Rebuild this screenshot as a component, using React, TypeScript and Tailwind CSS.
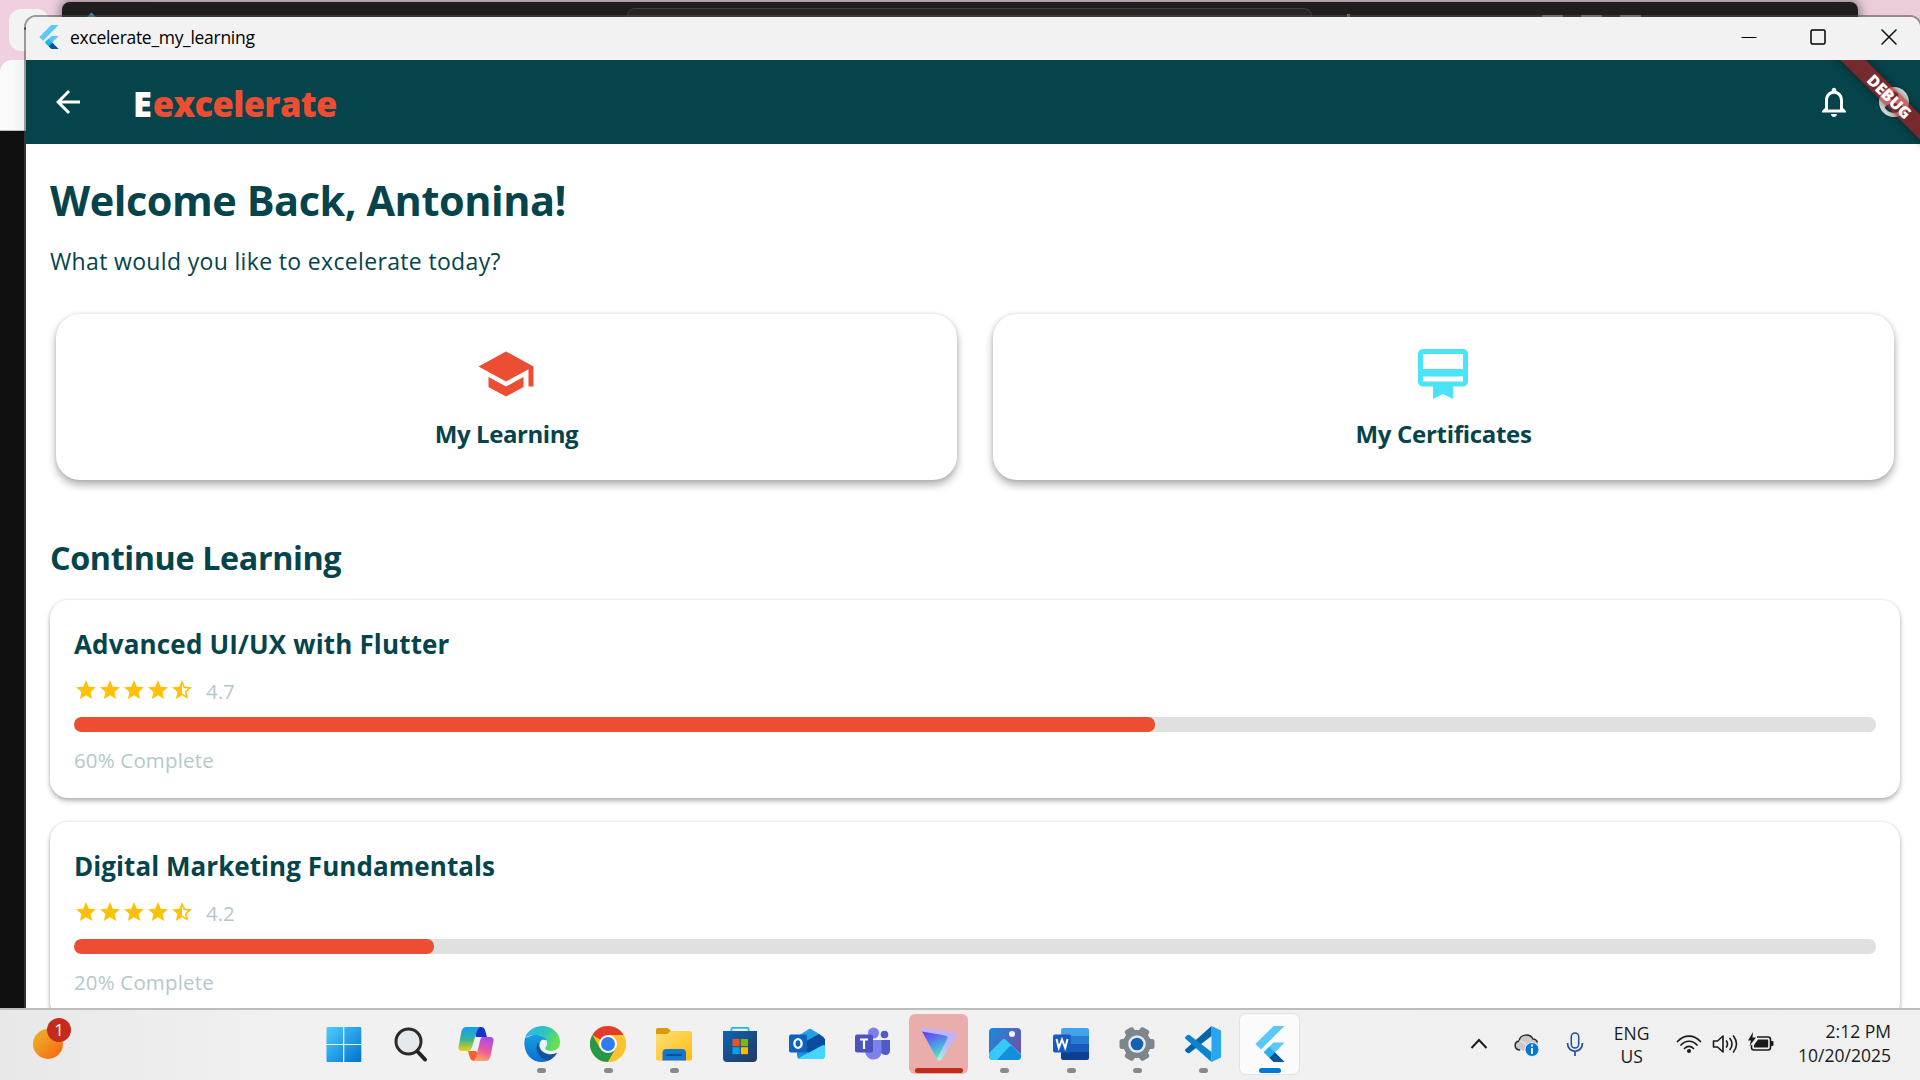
import React from "react";

const Svg = ({ className, viewBox = "0 0 36 36", children }: { className: string; viewBox?: string; children: React.ReactNode }) => (
  <svg className={className} viewBox={viewBox} fill="none">{children}</svg>
);

const FlutterLogo = ({ className }: { className: string }) => (
  <Svg className={className} viewBox="0 0 24 24">
    <path fill="#5bc8fa" d="M14.314 0L2.3 12 6 15.7 21.684.013z" />
    <path fill="#5bc8fa" d="M14.328 11.072L7.857 17.53l3.7 3.7L21.7 11.072z" />
    <path fill="#27b0ee" d="M11.55 13.84l3.7 3.69-3.7 3.7-3.69-3.7z" />
    <path fill="#01579b" d="M11.55 21.22l3.69-3.69L21.7 24h-7.37z" />
  </Svg>
);

const Star = ({ half = false }: { half?: boolean }) => (
  <Svg className="size-6" viewBox="0 0 24 24">
    <path
      fill="#ffc107"
      d={half
        ? "M22 9.24l-7.19-.62L12 2 9.19 8.63 2 9.24l5.46 4.73L5.82 21 12 17.27 18.18 21l-1.63-7.03L22 9.24zM12 15.4V6.1l1.71 4.04 4.38.38-3.32 2.88 1 4.28L12 15.4z"
        : "M12 17.27L18.18 21l-1.64-7.03L22 9.24l-7.19-.61L12 2 9.19 8.63 2 9.24l5.46 4.73L5.82 21z"}
    />
  </Svg>
);

const courses = [
  { title: "Advanced UI/UX with Flutter", rating: "4.7", progress: 60, spacing: "tracking-[0.17px]" },
  { title: "Digital Marketing Fundamentals", rating: "4.2", progress: 20, spacing: "tracking-[0.06px]" },
];

const CourseCard = ({ title, rating, progress, spacing }: (typeof courses)[number]) => (
  <article className="mb-6 h-[198px] rounded-[18px] bg-white px-6 pt-[26px] shadow-[0_3px_5px_rgba(0,0,0,0.28),0_0_3px_rgba(0,0,0,0.12)]">
    <h3 className={`text-[26px] leading-9 font-bold ${spacing}`}>{title}</h3>
    <div className="mt-4 flex h-6 items-center">
      <Star /><Star /><Star /><Star /><Star half />
      <span className="mt-px ml-[12px] text-[20.5px] leading-[26px] text-[#b4c8ca]">{rating}</span>
    </div>
    <div className="mt-[15px] h-[15px] overflow-hidden rounded-[7px] bg-[#e0e0e0]">
      <div className="h-full rounded-[7px] bg-[#ed4d32]" style={{ width: `${progress}%` }} />
    </div>
    <p className="mt-[14px] text-[20.5px] leading-7 tracking-[0.15px] text-[#b4c8ca]">{progress}% Complete</p>
  </article>
);

const TaskIcon = ({ children, tile = "", bar = "" }: { children: React.ReactNode; tile?: string; bar?: string }) => (
  <div className="flex w-[66.15px] justify-center pt-1">
    <div className={`flex h-[60px] w-[59px] flex-col items-center justify-between rounded-md pt-3 pb-px ${tile}`}>
      {children}
      <div className={`h-[5px] rounded-full ${bar}`} />
    </div>
  </div>
);
const dot = "w-[9px] bg-[#8a8a8a]";

const Taskbar = () => (
  <footer className="absolute inset-x-0 top-[1008px] flex h-[72px] border-t-2 border-[#bdbdbd] bg-gradient-to-r from-[#e8e8e8] via-[#f1f1f1] via-15% to-[#f0f0f0]">
    <div className="relative w-[310.500px] shrink-0">
      <div className="absolute top-[19px] left-[33px] size-[30px] rounded-full bg-gradient-to-br from-[#edb62c] to-[#f3620a]" />
      <div className="absolute top-[8px] left-[47px] size-6 rounded-full bg-[#c42b1c] text-center text-[17px] leading-6 text-white">1</div>
    </div>
    <TaskIcon>
      <Svg className="size-9"><defs><linearGradient id="win" x1="0" y1="0" x2="1" y2="1"><stop stopColor="#4ccdff" /><stop offset="1" stopColor="#0072cf" /></linearGradient></defs>
        <path fill="url(#win)" d="M.5 2a1 1 0 011-1H17v17H.5zM18.3 1h16a1 1 0 011 1v16h-17zM.5 19H17v17H1.5a1 1 0 01-1-1zM18.3 19h17v16a1 1 0 01-1 1h-16z" /></Svg>
    </TaskIcon>
    <TaskIcon>
      <Svg className="size-9"><circle cx="16.5" cy="15.5" r="12.5" stroke="#2b2b2b" strokeWidth="3" fill="#e6e9eb" /><path d="M26 26l7 7.5" stroke="#222" strokeWidth="4" strokeLinecap="round" /></Svg>
    </TaskIcon>
    <TaskIcon>
      <Svg className="size-9"><defs>
        <linearGradient id="cp1" x1="0" y1="0" x2="0" y2="1"><stop offset=".1" stopColor="#16a0ee" /><stop offset=".55" stopColor="#41b78a" /><stop offset="1" stopColor="#f2d20c" /></linearGradient>
        <linearGradient id="cp2" x1=".6" y1="0" x2=".3" y2="1"><stop stopColor="#a44cf0" /><stop offset=".55" stopColor="#ef5a99" /><stop offset="1" stopColor="#ffab5e" /></linearGradient></defs>
        <path d="M10 25l2 7q1 3 5 3h7l-6-10z" fill="#f4632e" /><path d="M16 1h7q3 0 4 3l2 7H18z" fill="#1436c4" />
        <path d="M8 1h14q-2 1-3 4l-5 16q-1 4-5 4H4q-4 0-3.500-4l3-16Q5 1 8 1z" fill="url(#cp1)" />
        <path d="M24 11h8q4 0 3.500 4l-3 15q-1 5-5 5H15q2-1 3-4l4-16q.5-3 2-4z" fill="url(#cp2)" /></Svg>
    </TaskIcon>
    <TaskIcon bar={dot}>
      <Svg className="size-9"><defs>
        <linearGradient id="eg1" x1="0" y1="0" x2="1" y2=".4"><stop stopColor="#2ab4f2" /><stop offset=".6" stopColor="#2fc6b8" /><stop offset="1" stopColor="#66e04f" /></linearGradient>
        <linearGradient id="eg2" x1="0" y1="0" x2="0" y2="1"><stop stopColor="#1a9fe2" /><stop offset="1" stopColor="#0a6fd0" /></linearGradient>
        <clipPath id="egc"><path d="M0 0h36v19q0 6-6 6-2 0-4-.5 3 2 7.500 1L36 36H0z" /></clipPath></defs>
        <path d="M1 12C-2 25 6 36 18 36c7 0 12-4 15-9-7 3-14 0-14-7 0-5 4-6 4-8L12 8z" fill="url(#eg2)" />
        <path d="M1 12C3 5 10 0 18 0c10 0 18 7 18 16 0 6-4 9-9 9-4 0-6-1-6-3 0-1 2-2 2-5 0-4-4-8-10-8C7 9 3 10 1 12z" fill="url(#eg1)" />
        <path d="M14.500 16c-3 4-2.500 9 .5 13 3 4 8 6.500 12 4 3-2 5-4 6-6.500-3 1.500-6 2-9 1.500-6-1-10-6-9.500-12z" fill="#12539f" />
        <path d="M18 14c3-1 5 1 5 3.500 0 3-2 3.500-2 5 0 1.500 2 2.500 6 2.500 2 0 4-.5 6-1.500l.5 2.500c-3 2-6 2.500-9 2-6-1-9-5-9-9 0-2.500 1-4 2.500-5z" fill="#eef2f5" /></Svg>
    </TaskIcon>
    <TaskIcon bar={dot}>
      <Svg className="size-9"><circle cx="18" cy="18" r="18" fill="#fdc014" />
        <path d="M18 18L2.400 9A18 18 0 0118 0c6.700 0 12.500 3.600 15.600 9z" fill="#e33b2e" />
        <path d="M2.400 9a18 18 0 0015.600 27l7.800-13.500L18 18 10.200 22.500z" fill="#279847" />
        <path d="M18 9h15.600A18 18 0 0118 36l7.800-13.500z" fill="#fdc32b" />
        <circle cx="18" cy="18" r="9" fill="#fff" /><circle cx="18" cy="18" r="7" fill="#2f7cf0" /></Svg>
    </TaskIcon>
    <TaskIcon bar={dot}>
      <Svg className="size-9"><defs><linearGradient id="fl" x1="0" y1="0" x2="1" y2="1"><stop stopColor="#ffe07a" /><stop offset="1" stopColor="#fcbb0b" /></linearGradient></defs>
        <path d="M0 4q0-2 2-2h9q1 0 2 1l2 2-3 4H0z" fill="#dd9a08" /><path d="M0 8h10q2 0 3-1.500L14.500 5H34q2 0 2 2v26q0 1.500-1.500 1.500h-33Q0 34.500 0 33z" fill="url(#fl)" />
        <path d="M6.500 34.500V27q0-4 4-4h15.500q4 0 4 4v7.500z" fill="#1079cf" /><path d="M11 29h14" stroke="#0b4e94" strokeWidth="2" strokeLinecap="round" /></Svg>
    </TaskIcon>
    <TaskIcon>
      <Svg className="size-9"><defs><linearGradient id="st" x1="0" y1="0" x2="1" y2="1"><stop stopColor="#0a66b8" /><stop offset="1" stopColor="#27365c" /></linearGradient></defs>
        <path d="M9.500 8V2.500q0-.7.700-.7h15.600q.7 0 .7.700V8" stroke="#24b5ee" strokeWidth="1.800" /><path d="M1 5h34v27q0 4-4 4H5q-4 0-4-4z" fill="url(#st)" />
        <path d="M10.500 13h7.200v7.200h-7.200z" fill="#f25022" /><path d="M18.800 13H26v7.200h-7.200z" fill="#7fba00" /><path d="M10.500 21.200h7.200v7h-7.200z" fill="#00a4ef" /><path d="M18.800 21.200H26v7h-7.200z" fill="#ffb900" /></Svg>
    </TaskIcon>
    <TaskIcon>
      <Svg className="size-9"><path d="M6 12L20 3q1-.6 2 0l13 8v6L22 31 6 22z" fill="#24a0e0" /><path d="M10 19L30 8l6 5v6L22 30z" fill="#0a4ba0" />
        <path d="M8 20l14 8 14-9v10q0 4-4 4H12q-4 0-4-4z" fill="#1e8fdc" /><path d="M8 33l26-14 2 1v9q0 4-4 4z" fill="#45d6ff" />
        <rect y="8.500" width="18" height="18" rx="2" fill="#0d63be" /><ellipse cx="9" cy="17.500" rx="3.600" ry="4.300" stroke="#fff" strokeWidth="2.300" /></Svg>
    </TaskIcon>
    <TaskIcon>
      <Svg className="size-9"><circle cx="18.500" cy="7" r="5.500" fill="#7b83eb" /><circle cx="29.500" cy="8.500" r="3.800" fill="#5059c9" /><path d="M26 14h9v10q0 5-4.500 5-3 0-4.500-2z" fill="#5059c9" /><path d="M10 14h16.500v11q0 8-8 8.500-6 0-8-6z" fill="#7b83eb" />
        <rect y="8.500" width="18" height="18" rx="2" fill="#4b53bc" /><path d="M5 13.500h8M9 13.500V23" stroke="#fff" strokeWidth="2.200" /></Svg>
    </TaskIcon>
    <TaskIcon tile="bg-[#e9aeab]" bar="w-12 bg-[#c42b1c]">
      <Svg className="size-9"><defs><linearGradient id="pv" x1=".2" y1="0" x2=".6" y2="1"><stop stopColor="#6a3df5" /><stop offset=".5" stopColor="#4f93e8" /><stop offset="1" stopColor="#4fe8bd" /></linearGradient>
        <linearGradient id="pw" x1="1" y1="0" x2=".5" y2="1"><stop stopColor="#c9a8ff" /><stop offset=".6" stopColor="#b7bdf5" /><stop offset="1" stopColor="#a8f3de" /></linearGradient></defs>
        <path d="M3 1.500l29 4.500q5 1 3 5L20.500 33.500q-2.500 2.500-4.500-.5L.6 4.500Q0 1 3 1.500z" fill="url(#pw)" /><path d="M1 5.500l23 4q3.500.7 2.200 3.500L17 31q-1 1.800-2 .2z" fill="url(#pv)" /></Svg>
    </TaskIcon>
    <TaskIcon bar={dot}>
      <Svg className="size-9"><defs><linearGradient id="ph" x1="0" y1="0" x2="1" y2=".8"><stop stopColor="#0f8fe0" /><stop offset="1" stopColor="#7a4aa5" /></linearGradient></defs>
        <rect x="2" y="2" width="32" height="32" rx="4" fill="url(#ph)" /><path d="M2 27l13-13q2-2 4 0l15 14v2q0 4-4 4H6q-4 0-4-4z" fill="#38c8f7" /><path d="M10 34l12-13q2-2 4 0l8 8v1q0 4-4 4z" fill="#1390dc" /><circle cx="25" cy="8" r="3" fill="#f4f4fb" /></Svg>
    </TaskIcon>
    <TaskIcon bar={dot}>
      <Svg className="size-9"><path d="M8 4q0-2 2-2h24q2 0 2 2v6H8z" fill="#41a5ee" /><path d="M8 10h28v8H8z" fill="#2b7cd3" /><path d="M8 18h28v8H8z" fill="#185abd" /><path d="M8 26h28v6q0 2-2 2H10q-2 0-2-2z" fill="#103f91" />
        <rect y="8.500" width="18" height="18" rx="2" fill="#185abd" /><path d="M3.500 13l2.300 9L9 13.500l3.200 8.500 2.300-9" stroke="#fff" strokeWidth="2" /></Svg>
    </TaskIcon>
    <TaskIcon bar={dot}>
      <Svg className="size-9"><g fill="#7d858d"><circle cx="18" cy="18" r="14" />{[0, 60, 120].map((a) => <rect key={a} x="13" y="0.500" width="10" height="35" rx="2.500" transform={`rotate(${a + 30} 18 18)`} />)}</g>
        <circle cx="18" cy="18" r="8.800" fill="#e8ecef" /><circle cx="18" cy="18" r="6.300" fill="#0f62b5" /></Svg>
    </TaskIcon>
    <TaskIcon bar={dot}>
      <Svg className="size-9"><path d="M26.500 0L36 4.500v27L26.500 36z" fill="#2aa5f2" /><path d="M26.500 0v10L4.500 27q-1 .7-2 0L.5 25.200q-1-1 0-2z" fill="#0065a9" /><path d="M26.500 36V26L4.500 9q-1-.7-2 0L.5 10.800q-1 1 0 2z" fill="#0a84cf" /></Svg>
    </TaskIcon>
    <TaskIcon tile="bg-[#fbfbfb] ring-1 ring-[#e2e2e2]" bar="w-[22px] bg-[#0078d4]">
      <FlutterLogo className="size-9" />
    </TaskIcon>
    <div className="flex flex-1 text-[17.5px] text-[#1b1b1b]">
      <Svg className="mt-[26px] ml-[167px] h-4 w-[18px]" viewBox="0 0 18 16"><path d="M1.500 12L9 4l7.500 8" stroke="#1b1b1b" strokeWidth="2" /></Svg>
      <Svg className="mt-[22px] ml-[26px] h-[26px] w-[26px]" viewBox="0 0 26 26"><path d="M6 18C0 18-.5 10 5 9c1-7 11-8 14-2 3 0 5 3 5 5v4l-6 4z" fill="#c9c9c9" /><path d="M6 18C0 18-.5 10 5 9c1-7 11-8 14-2 2 0 4 2 4.500 3.500" stroke="#2a2a2a" strokeWidth="1.500" /><path d="M5 9c4 0 6 2 8 5" stroke="#efefef" strokeWidth="1.200" /><circle cx="18" cy="17.500" r="7" fill="#0078d4" stroke="#f0f0f0" /><path d="M18 16v6M18 12.500v2" stroke="#fff" strokeWidth="1.800" /></Svg>
      <Svg className="mt-[21px] ml-[25px] h-[26px] w-[20px]" viewBox="0 0 20 26"><rect x="6.300" y="2" width="7.400" height="15" rx="3.700" stroke="#1c4fa0" strokeWidth="1.500" /><path d="M2.500 12c0 11 15 11 15 0M10 20.500V25" stroke="#1c4fa0" strokeWidth="1.700" /></Svg>
      <div className="mt-3 ml-[27px] w-[40px] text-center leading-[23px]">ENG<br />US</div>
      <Svg className="mt-[23px] ml-[24px] h-[22px] w-[26px]" viewBox="0 0 26 22"><g stroke="#1b1b1b" strokeWidth="1.700" strokeLinecap="round"><path d="M1.500 8.500c6.500-7.300 16.500-7.300 23 0M5 12c4.600-5 11.400-5 16 0M8.500 15.500c2.700-2.800 6.300-2.800 9 0" /></g><circle cx="13" cy="18" r="2" fill="#1b1b1b" /></Svg>
      <Svg className="mt-[23px] ml-[10px] h-[22px] w-[26px]" viewBox="0 0 26 22"><g stroke="#1b1b1b" strokeWidth="1.600" strokeLinecap="round" strokeLinejoin="round"><path d="M1.500 8h4L11 3v16l-5.500-5h-4zM14.500 8q2 3 0 6M18 5.500q4 5.500 0 11M21.500 3q6 8 0 16" /></g></Svg>
      <Svg className="mt-[22px] ml-[10px] h-[22px] w-[26px]" viewBox="0 0 26 22"><path d="M9 5h11q2.500 0 2.500 2.500v8Q22.500 18 20 18H6q-2.500 0-2.500-2.500V13" stroke="#1b1b1b" strokeWidth="1.600" /><path d="M10 7.500h9.500q.7 0 .7.700v6.600q0 .7-.7.700H6V13zM23 9h1.500q1 0 1 1v3q0 1-1 1H23z" fill="#1b1b1b" /><path d="M5 0L0 8.500h3L1.500 14 8 5.500H4.500z" fill="#1b1b1b" /></Svg>
      <div className="mt-[9px] mr-[29px] ml-auto text-right leading-6">2:12 PM<br />10/20/2025</div>
    </div>
  </footer>
);

const Backdrop = () => (
  <div className="absolute inset-0">
    <div className="absolute inset-x-0 top-0 h-[140px] bg-gradient-to-r from-[#f0cfe0] to-[#eaccdb]" />
    <div className="absolute top-[9px] left-[9px] h-[42px] w-10 rounded-xl bg-[#f3f3f3]" />
    <div className="absolute top-[27px] left-6 size-[3px] rounded-full bg-[#444]" />
    <div className="absolute top-[60px] left-0 h-[71px] w-[60px] rounded-tl-xl border-b border-[#bbb] bg-gradient-to-r from-[#fafafa] from-20% to-[#d8d8d8]" />
    <div className="absolute top-[131px] left-0 h-[880px] w-[60px] bg-[#101010]" />
    <div className="absolute top-[2px] left-[62px] h-20 w-[1796px] overflow-hidden rounded-t-lg bg-[#1e1e1e] shadow-[0_0_8px_3px_rgba(0,0,0,0.35)]">
      <div className="absolute top-[6px] left-[565px] h-8 w-[685px] rounded-lg border border-[#3f3f3f] bg-[#252525]" />
      <div className="absolute top-[12px] left-[26px] size-[7px] rotate-45 bg-[#2f8fc4]" />
      <div className="absolute top-[12px] left-[1285px] h-2 w-[3px] bg-[#667784]" />
      <div className="absolute top-[13px] left-[1480px] flex gap-[18px]">
        <div className="h-1 w-[21px] bg-[#909090]" />
        <div className="h-1 w-[21px] bg-[#909090]" />
        <div className="h-1 w-[21px] bg-[#909090]" />
      </div>
    </div>
  </div>
);

const actions = [
  { label: "My Learning", color: "#ed4d32", d: "M5 13.180v4L12 21l7-3.820v-4L12 17l-7-3.820zM12 3L1 9l11 6 9-4.910V17h2V9L12 3z", spacing: "tracking-[-0.42px]" },
  { label: "My Certificates", color: "#4be3f6", d: "M20 2H4c-1.110 0-2 .89-2 2v11c0 1.110.89 2 2 2h4v5l4-2 4 2v-5h4c1.110 0 2-.89 2-2V4c0-1.110-.89-2-2-2zm0 13H4v-2h16v2zm0-5H4V4h16v6z", spacing: "tracking-[-0.3px]" },
];

export default function App() {
  return (
    <div className="relative h-[1080px] w-[1920px] overflow-hidden bg-[#101010] font-['Open_Sans',sans-serif]">
      <Backdrop />
      <div className="absolute top-[17px] left-[26px] flex h-[991px] w-[1894px] flex-col overflow-hidden rounded-t-[10px] bg-white text-[#05444b] shadow-[0_0_0_2px_rgba(80,80,80,0.55)]">
        <div className="flex h-[43px] shrink-0 items-center bg-[#f2f2f2]">
          <FlutterLogo className="mt-[-3px] ml-[11px] size-6" />
          <span className="mt-[-2px] ml-[9px] text-[17.5px] tracking-[-0.3px] text-black">excelerate_my_learning</span>
          <div className="mt-[-3px] ml-auto flex">
            <Svg className="mr-[53px] size-4" viewBox="0 0 16 16"><path d="M.5 8.500h15" stroke="#000" strokeWidth="1.200" /></Svg>
            <Svg className="mr-[55px] size-4" viewBox="0 0 16 16"><rect x="1" y="1" width="14" height="14" rx="1.500" stroke="#000" strokeWidth="1.500" /></Svg>
            <Svg className="mr-[23px] size-4" viewBox="0 0 16 16"><path d="M.5.5l15 15m0-15l-15 15" stroke="#111" strokeWidth="1.500" /></Svg>
          </div>
        </div>
        <header className="relative flex h-[84px] shrink-0 items-center bg-[#05444b]">
          <Svg className="ml-6 size-9" viewBox="0 0 24 24"><path fill="#fff" d="M20 11H7.830l5.590-5.590L12 4l-8 8 8 8 1.410-1.410L7.830 13H20v-2z" /></Svg>
          <div className="mt-1 ml-[47px] text-[34.500px] leading-[44px] font-extrabold tracking-[-0.65px] text-[#ed4d32]"><span className="mr-[1.500px] text-white">E</span>excelerate</div>
          <Svg className="mr-[24px] ml-auto size-9" viewBox="0 0 24 24"><path fill="#fff" d="M12 22c1.100 0 2-.9 2-2h-4c0 1.100.89 2 2 2zm6-6v-5c0-3.070-1.640-5.640-4.500-6.320V4c0-.83-.67-1.500-1.500-1.500s-1.500.67-1.500 1.500v.68C7.630 5.360 6 7.920 6 11v5l-2 2v1h16v-1l-2-2zm-2 1H8v-6c0-2.480 1.510-4.500 4-4.500s4 2.020 4 4.500v6z" /></Svg>
          <Svg className="mr-[8px] size-9" viewBox="0 0 24 24"><path fill="#e0e0e0" d="M12 2C6.480 2 2 6.480 2 12s4.480 10 10 10 10-4.480 10-10S17.520 2 12 2zm0 3c1.660 0 3 1.340 3 3s-1.340 3-3 3-3-1.340-3-3 1.340-3 3-3zm0 14.200c-2.500 0-4.710-1.280-6-3.220.030-1.990 4-3.080 6-3.080 1.990 0 5.970 1.090 6 3.080-1.290 1.940-3.500 3.220-6 3.220z" /></Svg>
          <div className="absolute top-0 right-0 z-10 h-[110px] w-[110px] overflow-hidden">
            <div className="absolute top-[26.500px] left-[-1.500px] flex h-[18px] w-[160px] rotate-45 items-center justify-center bg-[#b71c1c]/63 pl-px text-[16px] leading-none font-extrabold tracking-[-0.1px] text-white shadow-[0_0_9px_rgba(0,0,0,0.5)]">DEBUG</div>
          </div>
        </header>
        <main className="h-[864px] px-6 pt-7 pr-5">
          <h1 className="text-[41.500px] leading-[56px] font-bold tracking-[-0.47px]">Welcome Back, Antonina!</h1>
          <p className="mt-[17px] text-[23px] leading-8 tracking-[0.34px]">What would you like to excelerate today?</p>
          <section className="mt-[37px] flex gap-9 pr-[6px] pl-[6px]">
            {actions.map((a) => (
              <div key={a.label} className="flex h-[166px] flex-1 flex-col items-center rounded-3xl bg-white pt-[30px] shadow-[0_5px_8px_rgba(0,0,0,0.3),0_0_4px_rgba(0,0,0,0.12)]">
                <Svg className="mr-px size-[60px]" viewBox="0 0 24 24"><path fill={a.color} d={a.d} /></Svg>
                <span className={`mt-[14px] text-[24px] leading-8 font-bold ${a.spacing}`}>{a.label}</span>
              </div>
            ))}
          </section>
          <h2 className="mt-[55px] mb-[21px] text-[32.300px] leading-[44px] font-bold tracking-[-0.38px]">Continue Learning</h2>
          {courses.map((c) => <CourseCard key={c.title} {...c} />)}
        </main>
      </div>
      <Taskbar />
    </div>
  );
}
